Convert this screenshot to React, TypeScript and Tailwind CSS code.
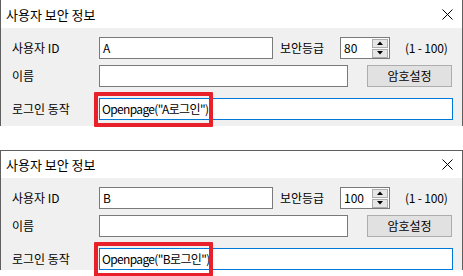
import React from "react";

const FONT = { fontFamily: '"Noto Sans CJK KR", "Noto Sans", sans-serif' };

function Spin({ value }: { value: string }) {
  return (
    <div className="ml-0 flex h-[22px] w-[50px] items-center border border-[#7a7a7a] bg-white">
      <div className="flex-1 pl-[3px] text-[12px] leading-none text-black">{value}</div>
      <div className="mr-[1px] flex h-full w-[16px] flex-col justify-center gap-[1px]">
        <div className="flex h-[9px] w-[16px] items-center justify-center border border-[#adadad] bg-[#e6e6e6]">
          <svg width="6" height="4" viewBox="0 0 6 4"><path d="M0 4 L3 0.5 L6 4 Z" fill="#000" /></svg>
        </div>
        <div className="flex h-[9px] w-[16px] items-center justify-center border border-[#adadad] bg-[#e6e6e6]">
          <svg width="6" height="4" viewBox="0 0 6 4"><path d="M0 0 L3 3.5 L6 0 Z" fill="#000" /></svg>
        </div>
      </div>
    </div>
  );
}

function Dialog({ id, level, first }: { id: string; level: string; first?: boolean }) {
  return (
    <div
      className={`flex w-[463px] flex-col border-x border-[#5f5f5f] ${first ? "h-[126px]" : "border-t"}`}
      style={FONT}
    >
      <div className={`flex items-center justify-between bg-white pl-[5px] pr-[9px] ${first ? "h-[28px]" : "h-[27px]"}`}>
        <span className="text-[13px] leading-none text-black">사용자 보안 정보</span>
        <svg width="11" height="11" viewBox="0 0 11 11">
          <path d="M0.5 0.5 L10.5 10.5 M10.5 0.5 L0.5 10.5" stroke="#000" strokeWidth="1" />
        </svg>
      </div>
      <div className="flex flex-1 flex-col bg-[#f0f0f0] pl-[11px] pt-[9px] text-[12px] text-black">
        <div className="flex h-[22px] items-center">
          <div className="w-[87px] leading-none">사용자 ID</div>
          <div className="flex h-[22px] w-[174px] items-center border border-[#7a7a7a] bg-white pl-[3px] leading-none">{id}</div>
          <div className="ml-[7px] w-[60px] leading-none">보안등급</div>
          <Spin value={level} />
          <div className="ml-[15px] leading-none tracking-[-0.2px]">(1 - 100)</div>
        </div>
        <div className="mt-[6px] flex h-[22px] items-center">
          <div className="w-[87px] leading-none">이름</div>
          <div className="h-[22px] w-[249px] border border-[#7a7a7a] bg-white" />
          <div className="ml-[19px] flex h-[22px] w-[85px] items-center justify-center border border-[#adadad] bg-[#e1e1e1] leading-none">
            암호설정
          </div>
        </div>
        <div className="mt-[11px] flex h-[22px] items-center">
          <div className="w-[87px] leading-none">로그인 동작</div>
          <div className="relative flex h-[22px] w-[354px] items-center border border-[#0078d7] bg-white pl-[2px] leading-none tracking-[-0.65px]">
            {`Openpage("${id}로그인")`}
            <div className="absolute left-[-6px] top-[-7px] h-[35px] w-[119px] rounded-[1px] border-[4px] border-[#e8202a]" />
          </div>
        </div>
      </div>
    </div>
  );
}

export default function App() {
  return (
    <div className="flex h-[276px] w-[463px] flex-col overflow-hidden bg-white">
      <Dialog id="A" level="80" first />
      <div className="h-[24px] shrink-0" />
      <Dialog id="B" level="100" />
    </div>
  );
}
